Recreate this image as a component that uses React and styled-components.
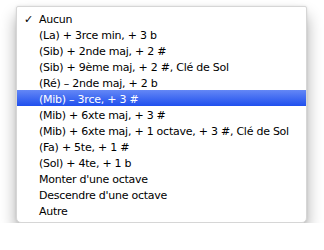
import React from 'react';
import styled, { createGlobalStyle } from 'styled-components';

const GlobalStyle = createGlobalStyle`
  html, body {
    margin: 0;
    padding: 0;
    background: #ffffff;
  }
  body {
    font-family: "DejaVu Sans", "Noto Sans", sans-serif;
  }
`;

const items = [
  { label: 'Aucun', checked: true },
  { label: '(La) + 3rce min, + 3 b' },
  { label: '(Sib) + 2nde maj, + 2 #' },
  { label: '(Sib) + 9ème maj, + 2 #, Clé de Sol' },
  { label: '(Ré) – 2nde maj, + 2 b' },
  { label: '(Mib) – 3rce, + 3 #', selected: true },
  { label: '(Mib) + 6xte maj, + 3 #' },
  { label: '(Mib) + 6xte maj, + 1 octave, + 3 #, Clé de Sol' },
  { label: '(Fa) + 5te, + 1 #' },
  { label: '(Sol) + 4te, + 1 b' },
  { label: "Monter d'une octave" },
  { label: "Descendre d'une octave" },
  { label: 'Autre' },
];

const Page = styled.div`
  padding: 6px 0 0 16px;
`;

const Menu = styled.ul`
  list-style: none;
  margin: 0;
  padding: 3px 0 4px;
  width: 291px;
  box-sizing: border-box;
  background: #ffffff;
  border: 1px solid #d6d6d6;
  border-radius: 2px 2px 5px 5px;
  box-shadow: 0 10px 16px rgba(0, 0, 0, 0.33), 0 0 3px rgba(0, 0, 0, 0.1);
`;

const Row = styled.li`
  display: flex;
  align-items: center;
  box-sizing: border-box;
  height: 16px;
  padding: 2px 0 0 7px;
  font-size: 11px;
  letter-spacing: -0.25px;
  color: ${(p) => (p.$selected ? '#ffffff' : '#000000')};
  background: ${(p) =>
    p.$selected ? 'linear-gradient(#6487f6, #1f4fee)' : 'transparent'};
  white-space: nowrap;
`;

const Check = styled.span`
  width: 15px;
  flex: none;
  font-size: 11px;
  font-weight: bold;
`;

export default function App() {
  return (
    <>
      <GlobalStyle />
      <Page>
        <Menu>
          {items.map((it) => (
            <Row key={it.label} $selected={it.selected}>
              <Check>{it.checked ? '✓' : ''}</Check>
              {it.label}
            </Row>
          ))}
        </Menu>
      </Page>
    </>
  );
}
